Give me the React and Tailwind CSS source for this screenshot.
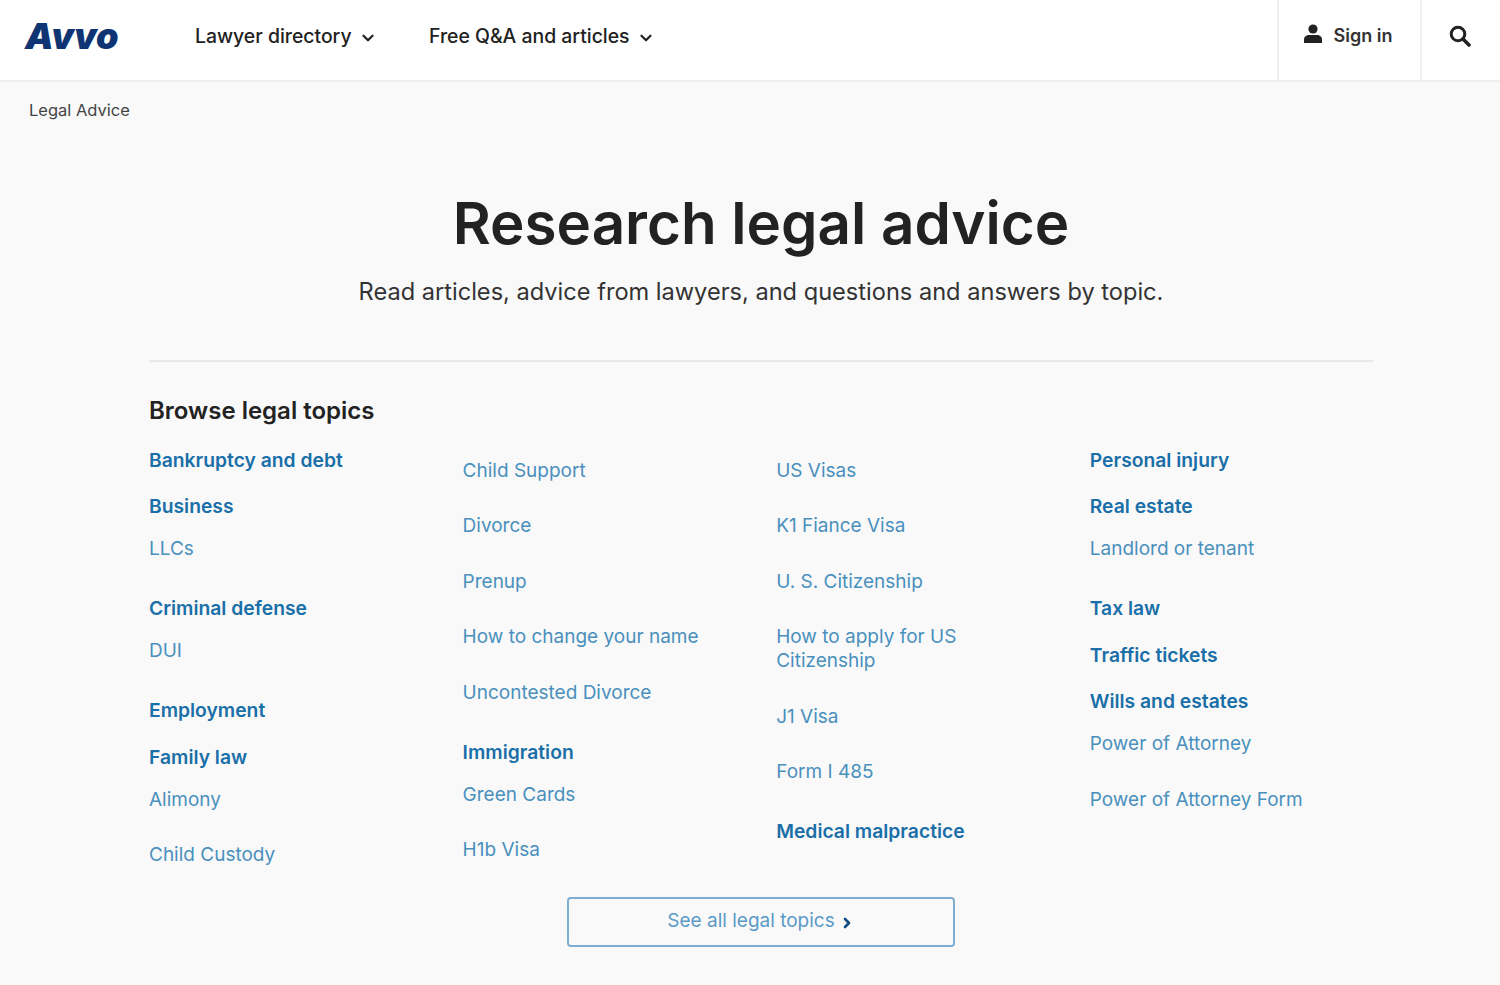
import { ChevronDown, ChevronRight } from 'lucide-react';

const columns = [
  [
    { title: 'Bankruptcy and debt' },
    { title: 'Business', links: ['LLCs'] },
    { title: 'Criminal defense', links: ['DUI'] },
    { title: 'Employment' },
    { title: 'Family law', links: ['Alimony', 'Child Custody'] },
  ],
  [
    { links: ['Child Support', 'Divorce', 'Prenup', 'How to change your name', 'Uncontested Divorce'] },
    { title: 'Immigration', links: ['Green Cards', 'H1b Visa'] },
  ],
  [
    { links: ['US Visas', 'K1 Fiance Visa', 'U. S. Citizenship', 'How to apply for US Citizenship', 'J1 Visa', 'Form I 485'] },
    { title: 'Medical malpractice' },
  ],
  [
    { title: 'Personal injury' },
    { title: 'Real estate', links: ['Landlord or tenant'] },
    { title: 'Tax law' },
    { title: 'Traffic tickets' },
    { title: 'Wills and estates', links: ['Power of Attorney', 'Power of Attorney Form'] },
  ],
];

function NavItem({ label, className }) {
  return (
    <a className={`flex items-center gap-[7px] text-[19.4px] font-medium text-[#222] ${className}`}>
      {label}
      <ChevronDown className="w-[18px] h-[18px] mt-[2px]" strokeWidth={3} />
    </a>
  );
}

function TopicGroup({ title, links }) {
  return (
    <div className="mb-[22.5px]">
      {title && <h3 className="text-[19.3px] leading-6 font-semibold text-[#1a6fa8]">{title}</h3>}
      {links && (
        <ul className={`flex flex-col gap-[31.5px] pb-[12.5px] ${title ? 'mt-[19px]' : 'mt-[11px]'}`}>
          {links.map(link => (
            <li key={link} className="text-[19px] leading-6 text-[#4a90bd] max-w-[245px]">{link}</li>
          ))}
        </ul>
      )}
    </div>
  );
}

export default function App() {
  return (
    <div className="min-h-[985px] bg-[#f9f9f9] font-['Inter','Liberation_Sans',sans-serif] overflow-hidden">
      <header className="h-[82px] bg-white border-b-2 border-[#eeeeee] flex items-stretch">
        <a className="ml-[25px] w-[170px] pt-[12px] text-[36px] leading-[48px] font-black italic text-[#0f3474]">Avvo</a>
        <nav className="flex items-center pb-[6px]">
          <NavItem label="Lawyer directory" className="w-[234px]" />
          <NavItem label="Free Q&A and articles" />
        </nav>
        <div className="ml-auto flex items-stretch">
          <a className="w-[143px] border-l-2 border-[#f0f0f0] flex items-center justify-center gap-[11px] pb-[9px] pr-[4px] text-[18px] font-semibold text-[#333]">
            <svg width="20" height="20" viewBox="0 0 20 20" fill="#222" className="mb-[3px]">
              <circle cx="10" cy="5" r="4.6" />
              <path d="M1 19v-3.5C1 12.5 3.500 11 6 11h8c2.500 0 5 1.500 5 4.500V19z" />
            </svg>
            Sign in
          </a>
          <a className="w-[80px] border-l-2 border-[#f0f0f0] flex items-center justify-center pb-[8px] pr-[3px]">
            <svg width="22" height="22" viewBox="0 0 22 22" fill="none" stroke="#222">
              <circle cx="9" cy="9" r="6.8" strokeWidth="3" />
              <path d="M14 14l6 6" strokeWidth="3.6" strokeLinecap="round" />
            </svg>
          </a>
        </div>
      </header>

      <div className="ml-[29px] mt-[16px] text-[16.500px] leading-6 text-[#444]">Legal Advice</div>

      <main className="ml-[149px] w-[1224px]">
        <div className="text-center border-b-2 border-[#e9e9e9] pb-[52px]">
          <h1 className="mt-[63px] text-[58.300px] leading-[76px] font-semibold text-[#222]">Research legal advice</h1>
          <p className="mt-[15px] text-[23.600px] leading-8 text-[#333]">Read articles, advice from lawyers, and questions and answers by topic.</p>
        </div>

        <h2 className="mt-[33px] text-[24px] leading-8 font-semibold text-[#222]">Browse legal topics</h2>

        <div className="mt-[20.500px] grid grid-cols-[repeat(4,313.6px)] h-[437px]">
          {columns.map((groups, i) => (
            <div key={i}>
              {groups.map((group, j) => (
                <TopicGroup key={j} title={group.title} links={group.links} />
              ))}
            </div>
          ))}
        </div>

        <a className="mx-auto mt-[12px] w-[388px] h-[50px] border-2 border-[#7fadd0] rounded-[4px] flex items-center justify-center gap-[4px] text-[19px] text-[#5b9ac6]">
          See all legal topics
          <ChevronRight className="w-[16px] h-[16px] text-[#0f4c81] mt-[2px]" strokeWidth={4} />
        </a>
      </main>
    </div>
  );
}
